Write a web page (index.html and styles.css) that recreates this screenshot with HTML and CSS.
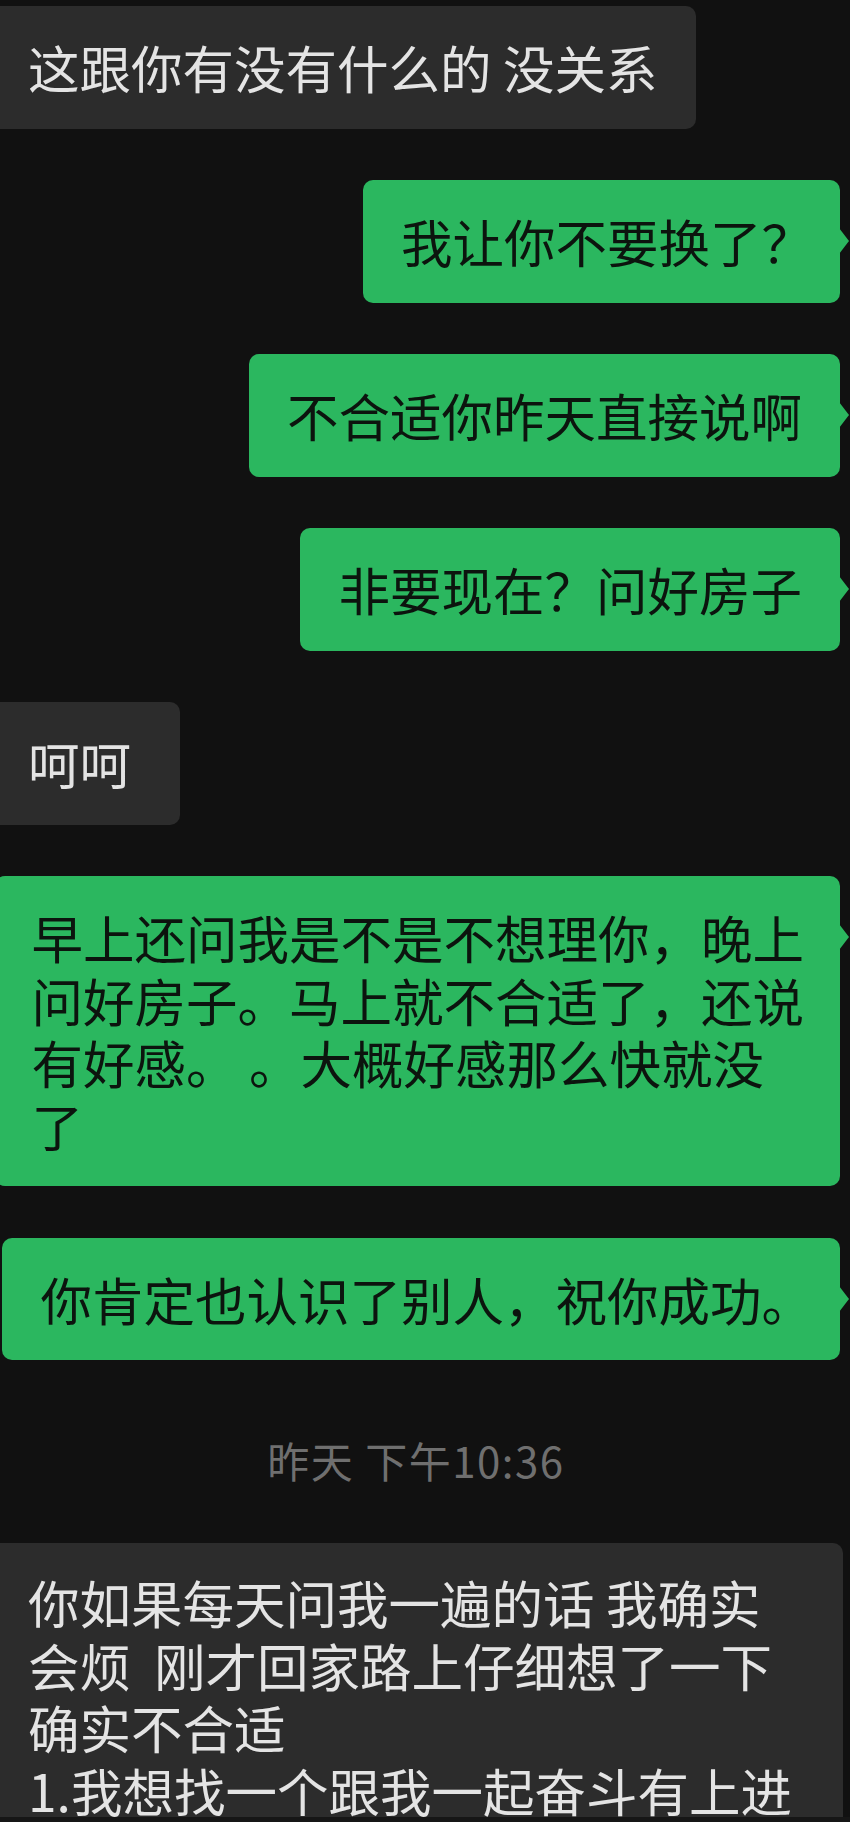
FILE: index.html
```html
<!DOCTYPE html>
<html lang="zh-CN">
<head>
    <meta charset="UTF-8">
    <meta name="viewport" content="width=device-width, initial-scale=1.0">
    <title>聊天记录</title>
    <link rel="stylesheet" href="styles.css">
</head>
<body>

    <div class="chat">
        <div class="row left">
            <div class="bubble gray">这跟你有没有什么的 没关系</div>
        </div>

        <div class="row right">
            <div class="bubble green punct">我让你不要换了？</div>
        </div>

        <div class="row right">
            <div class="bubble green">不合适你昨天直接说啊</div>
        </div>

        <div class="row right">
            <div class="bubble green">非要现在？问好房子</div>
        </div>

        <div class="row left">
            <div class="bubble gray short">呵呵</div>
        </div>

        <div class="row right">
            <div class="bubble green long">早上还问我是不是不想理你，晚上<br>问好房子。马上就不合适了，还说<br>有好感。 。大概好感那么快就没<br>了</div>
        </div>

        <div class="row right">
            <div class="bubble green punct">你肯定也认识了别人，祝你成功。</div>
        </div>

        <div class="time">昨天 下午10:36</div>

        <div class="row left">
            <div class="bubble gray wide">你如果每天问我一遍的话 我确实<br>会烦&nbsp; 刚才回家路上仔细想了一下<br>确实不合适<br>1.我想找一个跟我一起奋斗有上进</div>
        </div>
    </div>

</body>
</html>
```

FILE: styles.css
```css
body {
    margin: 0;
    padding: 0;
    background-color: #111111;
    font-family: "Noto Sans CJK SC", "Noto Sans", sans-serif;
}

.chat {
    display: flex;
    flex-direction: column;
    gap: 51.5px;
    padding-top: 6px;
    height: 1811px;
    overflow: hidden;
    border-bottom: 5px solid #161616;
}

.row {
    display: flex;
}

.row.left {
    justify-content: flex-start;
}

.row.right {
    justify-content: flex-end;
    padding-right: 10px;
}

.bubble {
    position: relative;
    flex-shrink: 0;
    font-size: 51.5px;
    line-height: 62.5px;
    padding: 30px 38px;
    border-radius: 10px;
    white-space: nowrap;
}

.bubble.gray {
    background-color: #2c2c2c;
    color: #e4e4e4;
    margin-left: -12px;
    padding-left: 40px;
}

.bubble.green {
    background-color: #2bb75f;
    color: #0c140e;
}

/* little tail pointing at the sender */
.bubble.green::after {
    content: "";
    position: absolute;
    top: 48px;
    right: -9px;
    border-left: 10px solid #2bb75f;
    border-top: 13px solid transparent;
    border-bottom: 13px solid transparent;
}

.bubble.punct {
    padding-right: 27px;
}

.bubble.short {
    min-width: 192px;
    box-sizing: border-box;
}

.bubble.long {
    padding-left: 36px;
    padding-right: 36px;
}

.bubble.wide {
    width: 855px;
    box-sizing: border-box;
    padding-top: 28px;
}

.time {
    text-align: center;
    font-size: 42px;
    line-height: 56px;
    letter-spacing: 1.5px;
    color: #6f6f6f;
    padding-right: 18px;
    margin: 20px 0 4px;
}
```
